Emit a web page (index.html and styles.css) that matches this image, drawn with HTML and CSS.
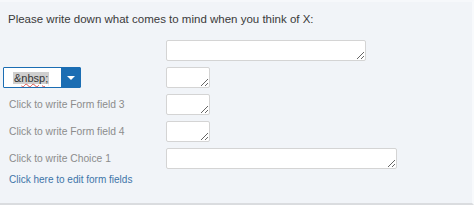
FILE: index.html
```html
<!DOCTYPE html>
<html lang="en">
<head>
    <meta charset="UTF-8">
    <title>Form field question</title>
    <link rel="stylesheet" href="styles.css">
</head>
<body>

<div class="question">
    <p class="question-text">Please write down what comes to mind when you think of X:</p>

    <div class="fields">
        <div class="field-row">
            <div class="field-label"></div>
            <textarea class="field-input wide"></textarea>
        </div>
        <div class="field-row">
            <div class="field-label select-cell">
                <div class="choice-select">
                    <span class="choice-value"><span class="choice-mark">&amp;<span class="typo">nbsp;</span></span></span>
                    <span class="choice-button"><span class="caret"></span></span>
                </div>
            </div>
            <textarea class="field-input small"></textarea>
        </div>
        <div class="field-row">
            <div class="field-label">Click to write Form field 3</div>
            <textarea class="field-input small"></textarea>
        </div>
        <div class="field-row">
            <div class="field-label">Click to write Form field 4</div>
            <textarea class="field-input small"></textarea>
        </div>
        <div class="field-row">
            <div class="field-label">Click to write Choice 1</div>
            <textarea class="field-input wider"></textarea>
        </div>
    </div>

    <a class="edit-link" href="#">Click here to edit form fields</a>
</div>

</body>
</html>
```

FILE: styles.css
```css
* { box-sizing: border-box; }
:root {
    --bg-color: #f1f4f8;
    --border-color: #d4d4d4;
    --blue: #1b6db3;
}
body {
    margin: 0px;
    background-color: var(--bg-color);
    font-family: "Liberation Sans", Arial, sans-serif;
}
.question {
    height: 205px;
    padding-top: 10px;
    border-top: 2px solid #f6f8fb;
    border-right: 2px solid #f8fafc;
    border-bottom: 2px solid #dadcdf;
}

.question-text {
    margin: 0px;
    padding-left: 8px;
    font-size: 11.5px;
    line-height: 14px;
    color: #3a3a3a;
}

.fields {
    margin-top: 14px;
    display: flex;
    flex-direction: column;
    gap: 6px;
}
.field-row {
    display: flex;
    align-items: center;
    height: 21px;
}
.field-label {
    width: 166px;
    padding-left: 9px;
    font-size: 10.3px;
    color: #8c8c8c;
}
.select-cell { padding-left: 3px; }

.field-input {
    height: 21px;
    margin: 0px;
    padding: 2px;
    background-color: #fff;
    border: 1px solid var(--border-color);
    border-radius: 2px;
    font-family: inherit;
}
.wide { width: 200px; }
.small { width: 44px; }
.wider { width: 231px; }

.choice-select {
    width: 78px;
    height: 21px;
    display: flex;
    border: 1px solid var(--blue);
    border-radius: 1px;
    background-color: #fff;
}
.choice-value {
    flex: 1;
    padding-left: 9px;
    display: flex;
    align-items: center;
    font-size: 11px;
    color: #333;
}
.choice-mark {
    background-color: #cfcfcf;
    padding: 0px 1px;
}
.typo {
    text-decoration: underline wavy #d9534f;
    text-decoration-thickness: 1px;
}
.choice-button {
    width: 19px;
    display: flex;
    align-items: center;
    justify-content: center;
    background-color: var(--blue);
}
.caret {
    width: 0;
    height: 0;
    border-left: 4px solid transparent;
    border-right: 4px solid transparent;
    border-top: 4px solid #fff;
}

.edit-link {
    display: block;
    margin-top: 5px;
    padding-left: 9px;
    font-size: 10px;
    line-height: 12px;
    color: #3d74a8;
    text-decoration: none;
}
```
